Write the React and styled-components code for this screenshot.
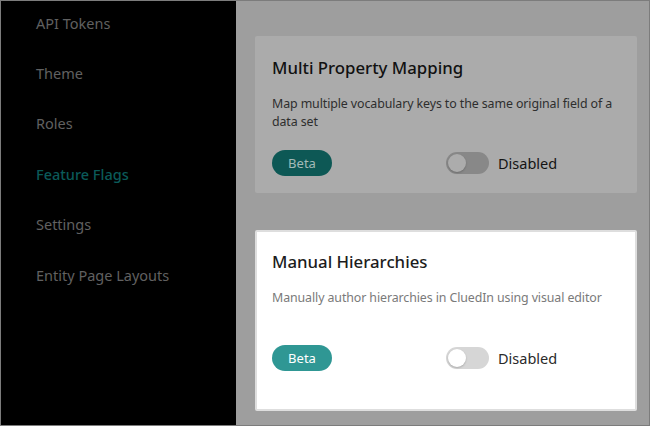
import React from "react";
import styled, { createGlobalStyle } from "styled-components";

const Global = createGlobalStyle`
  html, body { margin: 0; padding: 0; }
  body { font-family: "Noto Sans", "Open Sans", sans-serif; }
  * { box-sizing: border-box; }
`;

const Frame = styled.div`
  width: 650px;
  height: 426px;
  border: 1px solid #7c7c7c;
  display: grid;
  grid-template-columns: 235px 1fr;
  overflow: hidden;
  background: #9e9e9e;
`;

const Sidebar = styled.nav`
  background: #000;
  display: grid;
  grid-auto-rows: 50.4px;
  align-content: start;
  padding: 0 0 0 35px;
`;

const NavItem = styled.div`
  display: flex;
  align-items: center;
  padding-bottom: 7px;
  font-size: 14.5px;
  color: ${(p) => (p.$active ? "#0b5a59" : "#616161")};
  font-weight: ${(p) => (p.$active ? 500 : 400)};
`;

const Main = styled.main`
  display: flex;
  flex-direction: column;
  gap: 37px;
  padding: 35px 12px 0 19px;
`;

const Card = styled.section`
  background: ${(p) => (p.$highlight ? "#ffffff" : "#ababab")};
  border: 2px solid ${(p) => (p.$highlight ? "#dedede" : "#ababab")};
  border-radius: 2px;
  padding: 17px 15px 0 15px;
  min-height: ${(p) => p.$minH}px;
  display: flex;
  flex-direction: column;
`;

const Title = styled.h3`
  margin: 0;
  font-size: 16.8px;
  font-weight: 500;
  line-height: 26px;
  color: ${(p) => (p.$highlight ? "#1c1c1c" : "#111")};
`;

const Desc = styled.p`
  margin: 14px 0 0 0;
  font-size: 12.4px;
  letter-spacing: -0.1px;
  line-height: 17.5px;
  color: ${(p) => (p.$highlight ? "#7a7a7a" : "#2e2e2e")};
  min-height: ${(p) => p.$minH}px;
`;

const Row = styled.div`
  display: grid;
  grid-template-columns: 1fr 1fr;
  align-items: center;
  margin-top: ${(p) => p.$mt}px;
`;

const Pill = styled.span`
  width: 60px;
  height: 26px;
  border-radius: 13px;
  display: inline-flex;
  align-items: center;
  justify-content: center;
  font-size: 13px;
  background: ${(p) => (p.$highlight ? "#2f9794" : "#0d5855")};
  color: ${(p) => (p.$highlight ? "#ffffff" : "#a3bab8")};
`;

const ToggleWrap = styled.div`
  display: flex;
  align-items: center;
  gap: 9px;
`;

const Track = styled.span`
  width: 43px;
  height: 22px;
  border-radius: 11px;
  background: ${(p) => (p.$highlight ? "#d6d6d6" : "#888888")};
  display: flex;
  align-items: center;
  padding: 2px;
`;

const Knob = styled.span`
  width: 18px;
  height: 18px;
  border-radius: 50%;
  background: ${(p) => (p.$highlight ? "#ffffff" : "#acacac")};
  box-shadow: 0 1px 2px rgba(0, 0, 0, 0.2);
`;

const ToggleLabel = styled.span`
  font-size: 14.5px;
  color: ${(p) => (p.$highlight ? "#2a2a2a" : "#141414")};
`;

const navItems = ["API Tokens", "Theme", "Roles", "Feature Flags", "Settings", "Entity Page Layouts"];

function FeatureCard({ title, desc, highlight, minH, descH, rowMt }) {
  return (
    <Card $highlight={highlight} $minH={minH}>
      <Title $highlight={highlight}>{title}</Title>
      <Desc $highlight={highlight} $minH={descH}>{desc}</Desc>
      <Row $mt={rowMt}>
        <div>
          <Pill $highlight={highlight}>Beta</Pill>
        </div>
        <ToggleWrap>
          <Track $highlight={highlight}>
            <Knob $highlight={highlight} />
          </Track>
          <ToggleLabel $highlight={highlight}>Disabled</ToggleLabel>
        </ToggleWrap>
      </Row>
    </Card>
  );
}

export default function App() {
  return (
    <>
      <Global />
      <Frame>
        <Sidebar>
          {navItems.map((n) => (
            <NavItem key={n} $active={n === "Feature Flags"}>{n}</NavItem>
          ))}
        </Sidebar>
        <Main>
          <FeatureCard
            title="Multi Property Mapping"
            desc="Map multiple vocabulary keys to the same original field of a data set"
            minH={157}
            descH={35}
            rowMt={20}
          />
          <FeatureCard
            highlight
            title="Manual Hierarchies"
            desc="Manually author hierarchies in CluedIn using visual editor"
            minH={181}
            descH={35}
            rowMt={21}
          />
        </Main>
      </Frame>
    </>
  );
}
